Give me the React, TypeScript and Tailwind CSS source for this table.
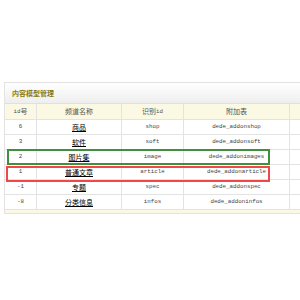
const rows = [
  { id: "6", name: "商品", nid: "shop", table: "dede_addonshop" },
  { id: "3", name: "软件", nid: "soft", table: "dede_addonsoft" },
  { id: "2", name: "图片集", nid: "image", table: "dede_addonimages" },
  { id: "1", name: "普通文章", nid: "article", table: "dede_addonarticle" },
  { id: "-1", name: "专题", nid: "spec", table: "dede_addonspec" },
  { id: "-8", name: "分类信息", nid: "infos", table: "dede_addoninfos" },
];

const cjk = "font-['SimSun','Noto_Sans_CJK_SC',sans-serif] text-[7px] leading-none";
const mono = "font-['Liberation_Mono',monospace] text-[5.8px] leading-none";
const cell = "flex items-center justify-center border-r border-[#e3e3e3]";

export default function App() {
  return (
    <div className="w-[300px] h-[300px] overflow-hidden bg-white pt-[82px] pl-[4px]">
      <div className="relative w-[320px] border border-[#e3e3e3] bg-white">
        <div className="h-[21px] flex items-center pl-[7px] bg-gradient-to-b from-white to-[#eeeeee] border-b border-[#e0e0e0]">
          <span className={`${cjk} font-bold text-[#8a7a0a]`}>内容模型管理</span>
        </div>
        <div className="grid grid-cols-[32px_85px_62px_106px_1fr] h-[16px] bg-[#fbf9e4] border-b border-[#e3e3e3] text-[#555]">
          <div className={cell}>
            <span className={mono}>id</span>
            <span className={cjk}>号</span>
          </div>
          <div className={cell}>
            <span className={cjk}>频道名称</span>
          </div>
          <div className={cell}>
            <span className={cjk}>识别</span>
            <span className={mono}>id</span>
          </div>
          <div className={cell}>
            <span className={cjk}>附加表</span>
          </div>
          <div />
        </div>
        {rows.map((r) => (
          <div
            key={r.id}
            className="grid grid-cols-[32px_85px_62px_106px_1fr] h-[15px] border-b border-[#e3e3e3] text-[#444]"
          >
            <div className={cell}>
              <span className={mono}>{r.id}</span>
            </div>
            <div className={cell}>
              <span className={`${cjk} underline text-black`}>{r.name}</span>
            </div>
            <div className={cell}>
              <span className={mono}>{r.nid}</span>
            </div>
            <div className={cell}>
              <span className={mono}>{r.table}</span>
            </div>
            <div />
          </div>
        ))}
        <div className="h-[3px] bg-[#fbf9e4]" />
        <div className="absolute left-[2px] top-[66px] w-[263px] h-[16px] border-2 border-[#3f8f3f] pointer-events-none" />
        <div className="absolute left-[1px] top-[83px] w-[264px] h-[16px] border-2 border-[#f04848] pointer-events-none" />
      </div>
    </div>
  );
}
